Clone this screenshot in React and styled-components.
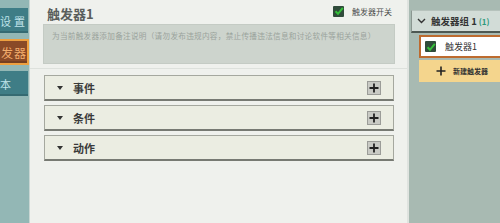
import React from "react";
import styled, { createGlobalStyle } from "styled-components";

const Global = createGlobalStyle`
  html, body { margin: 0; padding: 0; }
  body {
    width: 500px; height: 223px; overflow: hidden;
    font-family: "Noto Sans CJK SC", "Noto Sans", sans-serif;
  }
`;

const Page = styled.div`
  display: grid;
  grid-template-columns: 30px 379px 91px;
  width: 500px;
  height: 223px;
  overflow: hidden;
`;

const Sidebar = styled.div`
  background: #93b7b5;
  display: flex;
  flex-direction: column;
  gap: 6px;
  padding-top: 8px;
  border-right: 1px solid #c9d6d3;
  overflow: hidden;
`;

const SideButton = styled.div`
  display: flex;
  align-items: center;
  justify-content: flex-start;
  white-space: nowrap;
  overflow: hidden;
  box-sizing: border-box;
  width: ${p => (p.$active ? 29 : 28)}px;
  height: ${p => (p.$active ? 26 : 25)}px;
  padding-left: ${p => (p.$active ? 1 : 0)}px;
  background: ${p => (p.$active ? "#8a4a27" : "#3f7d86")};
  border: ${p => (p.$active ? "2px solid #eda040" : "0")};
  border-left: 0;
  color: ${p => (p.$active ? "#f3ad6c" : "#bfe3ea")};
  font-size: ${p => (p.$active ? 12 : 11)}px;
  letter-spacing: ${p => (p.$active ? 1 : 3)}px;
  box-shadow: inset 0 -2px 0 rgba(0,0,0,0.15);
`;

const Main = styled.div`
  background: #eff1ed;
  border-right: 2px solid #dfe3df;
  display: flex;
  flex-direction: column;
`;

const Header = styled.div`
  padding: 3px 12px 4px 13px;
  border-bottom: 1px solid #dde1dc;
`;

const TitleRow = styled.div`
  display: flex;
  align-items: center;
  height: 20px;
  padding-left: 4px;
`;

const Title = styled.div`
  font-size: 13px;
  font-weight: 700;
  color: #5a5e5c;
  flex: 1;
`;

const Toggle = styled.div`
  display: flex;
  align-items: center;
  gap: 8px;
  font-size: 8px;
  color: #4a4c4b;
  margin-right: 3px;
  margin-top: -4px;
`;

const CheckBox = styled.div`
  width: ${p => p.$size || 10}px;
  height: ${p => p.$size || 10}px;
  background: #2f4b3a;
  border-radius: 1px;
  display: flex;
  align-items: center;
  justify-content: center;
`;

const Note = styled.div`
  height: 40px;
  background: #cdd4cd;
  border: 1px solid #c4cbc4;
  margin-top: 1px;
  padding: 6px 6px 6px 8px;
  box-sizing: border-box;
  font-size: 7.6px;
  letter-spacing: 0.3px;
  line-height: 10px;
  color: #9aa39c;
  white-space: nowrap;
  overflow: hidden;
`;

const Sections = styled.div`
  display: flex;
  flex-direction: column;
  gap: 4px;
  padding: 6px 13px 0 14px;
`;

const Section = styled.div`
  height: 23px;
  background: #ebede2;
  border: 1px solid #a5a89f;
  border-bottom: 2px solid #777a73;
  display: flex;
  align-items: center;
  padding: 0 12px 0 12px;
`;

const Arrow = styled.span`
  width: 0; height: 0;
  border-left: 3px solid transparent;
  border-right: 3px solid transparent;
  border-top: 4px solid #333;
  margin-right: 10px;
`;

const SectionLabel = styled.div`
  font-size: 11px;
  font-weight: 700;
  color: #3a3a3a;
  flex: 1;
`;

const PlusBox = styled.div`
  width: 14px;
  height: 14px;
  background: #c9cac5;
  border: 1px solid #9b9c98;
  box-sizing: border-box;
  display: flex;
  align-items: center;
  justify-content: center;
`;

const Right = styled.div`
  background: #a8bab2;
  padding-top: 10px;
  display: flex;
  flex-direction: column;
`;

const Group = styled.div`
  height: 20px;
  margin-left: 2px;
  background: #d2dcd7;
  border-bottom: 2px solid #4d5852;
  border-left: 1px solid #8a9690;
  border-top: 1px solid #b6c2bc;
  display: flex;
  align-items: center;
  padding-left: 5px;
  font-size: 9.5px;
  font-weight: 700;
  color: #333;
  white-space: nowrap;
`;

const Count = styled.span`
  color: #2c9a7c;
  margin-left: 2px;
  font-size: 8px;
`;

const Item = styled.div`
  margin: 2px 0 0 10px;
  height: 23px;
  box-sizing: border-box;
  background: #ffffff;
  border: 2px solid #bd6b2f;
  border-right: 0;
  display: flex;
  align-items: center;
  padding-left: 4px;
  gap: 9px;
  font-size: 9px;
  color: #333;
`;

const NewButton = styled.div`
  margin: 2px 0 0 10px;
  height: 22px;
  background: #f4d58d;
  display: flex;
  align-items: center;
  padding-left: 17px;
  gap: 7px;
  font-size: 7px;
  color: #333;
  font-weight: 700;
`;

const Check = ({ size = 10 }) => (
  <CheckBox $size={size}>
    <svg width={size - 1} height={size - 1} viewBox="0 0 10 10">
      <path d="M1.5 5.2 L4 7.8 L8.8 1.8" stroke="#35c13a" strokeWidth="2" fill="none" />
    </svg>
  </CheckBox>
);

const Plus = ({ size = 10, color = "#222", w = 1.8 }) => (
  <svg width={size} height={size} viewBox="0 0 10 10">
    <path d="M5 0.5 V9.5 M0.5 5 H9.5" stroke={color} strokeWidth={w} />
  </svg>
);

export default function App() {
  return (
    <>
      <Global />
      <Page>
        <Sidebar>
          <SideButton>设置</SideButton>
          <SideButton $active>发器</SideButton>
          <SideButton>本</SideButton>
        </Sidebar>
        <Main>
          <Header>
            <TitleRow>
              <Title>触发器1</Title>
              <Toggle>
                <Check size={11} />
                <span>触发器开关</span>
              </Toggle>
            </TitleRow>
            <Note>为当前触发器添加备注说明（请勿发布违规内容，禁止传播违法信息和讨论软件等相关信息）</Note>
          </Header>
          <Sections>
            {["事件", "条件", "动作"].map(s => (
              <Section key={s}>
                <Arrow />
                <SectionLabel>{s}</SectionLabel>
                <PlusBox>
                  <Plus size={10} />
                </PlusBox>
              </Section>
            ))}
          </Sections>
        </Main>
        <Right>
          <Group>
            <svg width="9" height="6" viewBox="0 0 9 6" style={{ marginRight: 5 }}>
              <path d="M1 1 L4.5 4.5 L8 1" stroke="#333" strokeWidth="1.4" fill="none" />
            </svg>
            触发器组 1<Count>(1)</Count>
          </Group>
          <Item>
            <Check size={11} />
            <span>触发器1</span>
          </Item>
          <NewButton>
            <Plus size={10} color="#222" w={1.6} />
            <span>新建触发器</span>
          </NewButton>
        </Right>
      </Page>
    </>
  );
}
